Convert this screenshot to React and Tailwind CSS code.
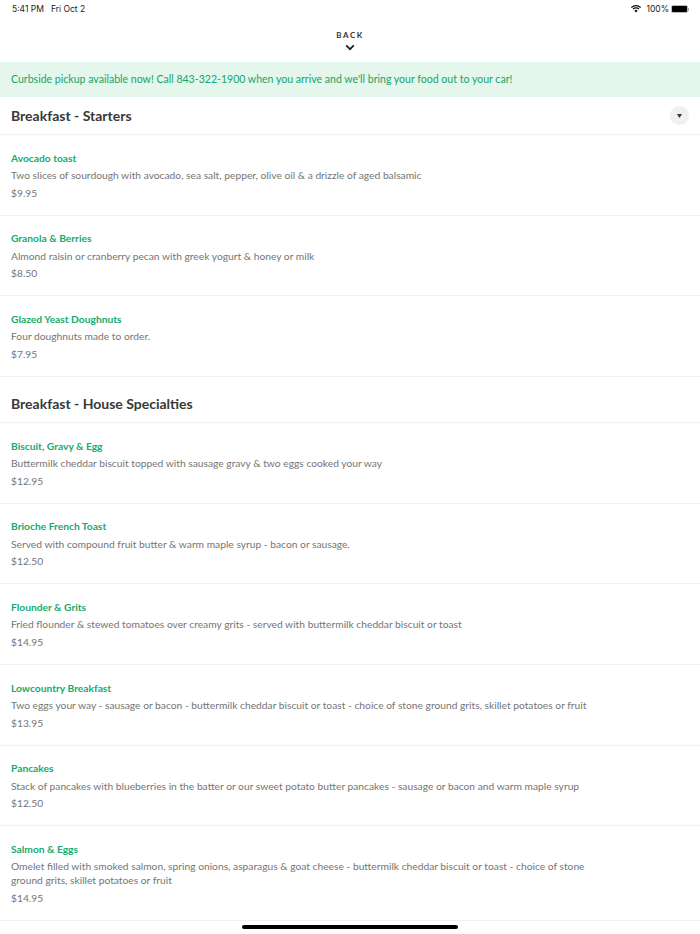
import React from "react";

const Item = ({ name, desc, price }) => (
  <div className="flex flex-col gap-[3.5px] border-b border-[#f2f2f2] pt-[15.5px] pb-[15.1px] px-[11px]">
    <div className="text-[10.25px] leading-[14px] font-bold text-[#14ab6c]">{name}</div>
    <div className="text-[10.25px] leading-[14px] text-[#757575] max-w-[590px]">{desc}</div>
    <div className="text-[10.25px] leading-[14px] text-[#757575]">{price}</div>
  </div>
);

const starters = [
  ["Avocado toast", "Two slices of sourdough with avocado, sea salt, pepper, olive oil & a drizzle of aged balsamic", "$9.95"],
  ["Granola & Berries", "Almond raisin or cranberry pecan with greek yogurt & honey or milk", "$8.50"],
  ["Glazed Yeast Doughnuts", "Four doughnuts made to order.", "$7.95"],
];
const specials = [
  ["Biscuit, Gravy & Egg", "Buttermilk cheddar biscuit topped with sausage gravy & two eggs cooked your way", "$12.95"],
  ["Brioche French Toast", "Served with compound fruit butter & warm maple syrup - bacon or sausage.", "$12.50"],
  ["Flounder & Grits", "Fried flounder & stewed tomatoes over creamy grits - served with buttermilk cheddar biscuit or toast", "$14.95"],
  ["Lowcountry Breakfast", "Two eggs your way - sausage or bacon - buttermilk cheddar biscuit or toast - choice of stone ground grits, skillet potatoes or fruit", "$13.95"],
  ["Pancakes", "Stack of pancakes with blueberries in the batter or our sweet potato butter pancakes - sausage or bacon and warm maple syrup", "$12.50"],
  ["Salmon & Eggs", "Omelet filled with smoked salmon, spring onions, asparagus & goat cheese - buttermilk cheddar biscuit or toast - choice of stone ground grits, skillet potatoes or fruit", "$14.95"],
];

export default function App() {
  return (
    <div className="relative h-[934px] w-[700px] overflow-hidden bg-white font-['Lato',sans-serif]">
      <div className="flex h-[18px] items-center justify-between pl-[12px] pr-[11px] text-[8.5px] font-['Inter',sans-serif] text-[#222]">
        <div className="flex gap-[7px]"><span>5:41 PM</span><span>Fri Oct 2</span></div>
        <div className="flex items-center gap-[2px]">
          <svg width="10" height="8" viewBox="0 0 11 9" className="mr-[3px]">
            <path d="M0.3 2.9 A7.4 7.4 0 0 1 10.7 2.9" fill="none" stroke="#111" strokeWidth="1.4" />
            <path d="M2.1 4.7 A4.8 4.8 0 0 1 8.9 4.7" fill="none" stroke="#111" strokeWidth="1.4" />
            <path d="M3.7 6.4 A2.5 2.5 0 0 1 7.3 6.4 L5.5 8.3 Z" fill="#111" />
          </svg>
          <span>100%</span>
          <div className="flex items-center">
            <div className="h-[8px] w-[17px] rounded-[2px] border border-[#bbb] bg-black" />
            <div className="h-[3px] w-[1px] bg-[#aaa]" />
          </div>
        </div>
      </div>
      <div className="flex h-[44px] flex-col items-center pt-[12px]">
        <div className="text-[8px] leading-[10px] font-bold tracking-[1.6px] text-[#333]">BACK</div>
        <svg width="10" height="7" viewBox="0 0 10 7" className="mt-[4px]">
          <path d="M1.2 1.4 L5 5.2 L8.8 1.4" fill="none" stroke="#222" strokeWidth="1.8" />
        </svg>
      </div>
      <div className="flex h-[35px] items-center bg-[#e5f6ed] px-[11px] pt-[1px] text-[10.55px] text-[#14a56b]">
        Curbside pickup available now! Call 843-322-1900 when you arrive and we'll bring your food out to your car!
      </div>
      <div className="flex h-[38px] items-center justify-between border-b border-[#f2f2f2] pl-[11px] pr-[11px]">
        <div className="text-[14px] font-bold text-[#383838]">Breakfast - Starters</div>
        <div className="flex h-[19px] w-[19px] items-center justify-center rounded-full bg-[#f0f0f0]">
          <svg width="5" height="4" viewBox="0 0 5 4"><path d="M0 0 H5 L2.5 4 Z" fill="#333" /></svg>
        </div>
      </div>
      {starters.map(([n, d, p]) => <Item key={n} name={n} desc={d} price={p} />)}
      <div className="flex h-[46.5px] items-center border-b border-[#f2f2f2] pt-[8.5px] px-[11px]">
        <div className="text-[14px] font-bold text-[#383838]">Breakfast - House Specialties</div>
      </div>
      {specials.map(([n, d, p]) => <Item key={n} name={n} desc={d} price={p} />)}
      <div className="absolute bottom-[5px] left-[242px] h-[4px] w-[216px] rounded-full bg-black" />
    </div>
  );
}
